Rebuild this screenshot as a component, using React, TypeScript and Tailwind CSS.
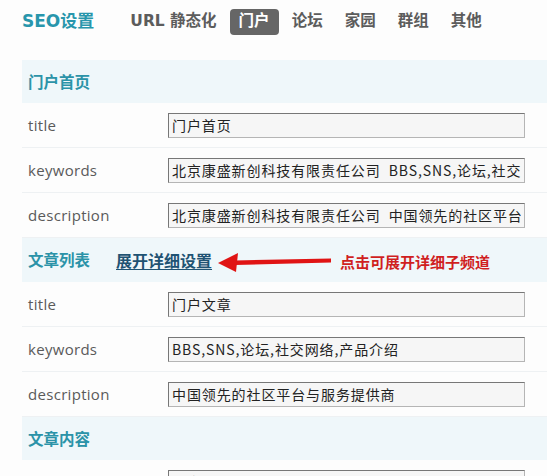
import React from 'react';

const cjk = '"Noto Sans CJK SC", sans-serif';

type Field = { label: string; value: string };

const tabs = ['URL 静态化', '门户', '论坛', '家园', '群组', '其他'];

const SectionHead = ({ children, tall }: { children: React.ReactNode; tall?: boolean }) => (
    <div
        className={`${tall ? 'h-[44px]' : 'h-[43px]'} bg-[#eff7fa] pl-[6px] flex items-center`}
    >
        {children}
    </div>
);

const FieldRow = ({ label, value }: Field) => (
    <div className="h-[45px] flex items-center border-b border-[#eef1f3]">
        <div
            className="w-[146px] pl-[6px] text-[15px] tracking-[0.3px] text-[#5a5a5a]"
            style={{ fontFamily: '"Open Sans", sans-serif' }}
        >
            {label}
        </div>
        <input
            readOnly
            value={value}
            className="w-[357px] h-[25px] px-[3px] bg-[#f6f6f6] border border-[#b5b5b5] border-t-[#777] border-l-[#777] text-[14px] tracking-[0.9px] text-[#222] outline-none"
            style={{ fontFamily: cjk }}
        />
    </div>
);

const Arrow = () => (
    <svg width="118" height="26" viewBox="0 0 118 26" className="ml-[3px] shrink-0">
        <polygon points="20,13.5 116,11.5 116,15.5 20,18" fill="#e01414" />
        <polygon points="3,16 23,6 21,25" fill="#e01414" />
    </svg>
);

export default function App() {
    const sectionText = 'text-[15.5px] font-bold text-[#2b93a8]';

    return (
        <div className="w-[547px] h-[476px] overflow-hidden bg-[#fdfdfd]" style={{ fontFamily: cjk }}>
            {/* top nav */}
            <div className="h-[44px] pl-[22px] flex items-center">
                <div
                    className="text-[17px] font-bold text-[#2896ac] mr-[27px]"
                    style={{ fontFamily: '"DejaVu Sans", "Noto Sans CJK SC", sans-serif' }}
                >
                    SEO设置
                </div>
                <div className="flex items-center gap-[4px]">
                    {tabs.map((t) => (
                        <span
                            key={t}
                            className={`h-[26px] px-[9px] flex items-center rounded-[4px] text-[15.5px] font-bold ${
                                t === '门户' ? 'bg-[#666] text-white' : 'text-[#5c5c5c]'
                            }`}
                            style={{ fontFamily: '"DejaVu Sans", "Noto Sans CJK SC", sans-serif' }}
                        >
                            {t}
                        </span>
                    ))}
                </div>
            </div>

            <div className="mt-[16px] ml-[22px]">
                <SectionHead>
                    <span className={sectionText}>门户首页</span>
                </SectionHead>
                <FieldRow label="title" value="门户首页" />
                <FieldRow label="keywords" value="北京康盛新创科技有限责任公司  BBS,SNS,论坛,社交网络,产品介绍" />
                <FieldRow label="description" value="北京康盛新创科技有限责任公司  中国领先的社区平台与服务提供商" />

                <SectionHead tall>
                    <span className={sectionText}>文章列表</span>
                    <a href="#" className="ml-[26px] text-[16px] font-bold text-[#1f5373] underline underline-offset-2">
                        展开详细设置
                    </a>
                    <Arrow />
                    <span className="ml-[7px] mt-[5px] text-[15px] font-bold text-[#d01f1f]">点击可展开详细子频道</span>
                </SectionHead>
                <FieldRow label="title" value="门户文章" />
                <FieldRow label="keywords" value="BBS,SNS,论坛,社交网络,产品介绍" />
                <FieldRow label="description" value="中国领先的社区平台与服务提供商" />

                <SectionHead>
                    <span className={sectionText}>文章内容</span>
                </SectionHead>
                <FieldRow label="title" value="文章内容" />
            </div>
        </div>
    );
}
